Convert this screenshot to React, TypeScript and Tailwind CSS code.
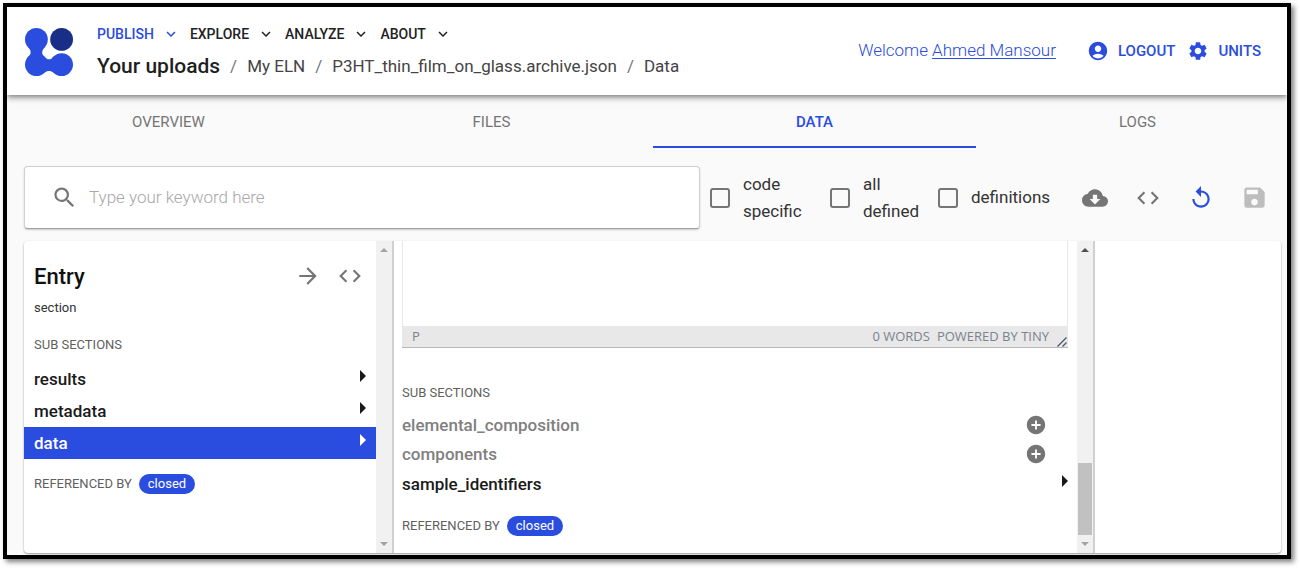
import React from 'react';
import {
  MdAccountCircle,
  MdAddCircle,
  MdArrowForward,
  MdCloudDownload,
  MdCode,
  MdExpandMore,
  MdReplay,
  MdSave,
  MdSearch,
  MdSettings,
} from 'react-icons/md';

function Logo() {
  return (
    <svg viewBox="0 0 48 48" className="mt-[2px] size-12 shrink-0" aria-label="Home" role="img">
      <g fill="#2a4cdf">
        <circle cx="11.4" cy="11.4" r="11.4" />
        <circle cx="11.4" cy="36.6" r="11.4" />
        <circle cx="36.6" cy="36.6" r="11.4" />
        <path d="M2.6 18.6C4.6 20.7 5.6 22.4 5.6 24.4S4.6 27.6 2.6 29.4L11.4 40L19 44.9C21 43.6 22.4 43 24 43S27 43.6 29 44.9L36 37L29.4 27.7C27.6 30.2 26 31.3 24 31.3C22.4 31.3 21.3 30.9 19.4 28.8C17.9 27.2 17.2 26 17.2 24.4C17.2 22.4 18.2 20.7 20.4 18.4L11.4 10Z" />
      </g>
      <circle cx="36.6" cy="11.4" r="11.4" fill="#192e86" />
    </svg>
  );
}

function Triangle() {
  return (
    <svg viewBox="0 0 6 12" className="mb-2 h-3 w-[6px] shrink-0" aria-hidden="true">
      <path d="M0 0L6 6L0 12Z" fill="currentColor" />
    </svg>
  );
}

const menu = [
  { label: 'PUBLISH', active: true },
  { label: 'EXPLORE', active: false },
  { label: 'ANALYZE', active: false },
  { label: 'ABOUT', active: false },
];

function Header() {
  return (
    <header className="relative z-10 flex h-[88px] items-center bg-white pr-[26px] pl-[18px] shadow-[0_2px_4px_-1px_rgba(0,0,0,0.3),0_4px_5px_rgba(0,0,0,0.18),0_1px_10px_rgba(0,0,0,0.14)]">
      <Logo />
      <div className="ml-6 flex flex-1 flex-col pt-1">
        <nav className="flex h-6 items-center gap-[10px]">
          {menu.map((m) => (
            <button
              key={m.label}
              className={`flex items-center gap-2 text-sm font-medium ${m.active ? 'text-[#2a4cdf]' : 'text-[#222]'}`}
            >
              {m.label}
              <MdExpandMore className="size-[18px]" />
            </button>
          ))}
        </nav>
        <nav aria-label="Breadcrumb" className="mt-[3px] flex h-9 items-center gap-[10px] text-[17px] whitespace-nowrap text-[#444]">
          <a href="#uploads" className="text-[21px] font-medium text-[#1f1f1f]">Your uploads</a>
          <span className="text-[#777]">/</span>
          <a href="#eln">My ELN</a>
          <span className="text-[#777]">/</span>
          <a href="#entry">P3HT_thin_film_on_glass.archive.json</a>
          <span className="text-[#777]">/</span>
          <a href="#data">Data</a>
        </nav>
      </div>
      <div className="flex items-center text-[#2a4cdf]">
        <span className="text-[17px] font-light">
          Welcome <a href="#account" className="underline underline-offset-2">Ahmed Mansour</a>
        </span>
        <button className="ml-[31px] flex items-center gap-[9px] text-[15px] font-medium">
          <MdAccountCircle className="size-[22px]" />
          LOGOUT
        </button>
        <button className="ml-3 flex items-center gap-[9px] text-[15px] font-medium">
          <MdSettings className="size-[22px]" />
          UNITS
        </button>
      </div>
    </header>
  );
}

function Tabs() {
  const tabs = ['OVERVIEW', 'FILES', 'DATA', 'LOGS'];
  return (
    <div role="tablist" className="-mr-3 grid grid-cols-4">
      {tabs.map((t) => (
        <button
          key={t}
          role="tab"
          aria-selected={t === 'DATA'}
          className={`h-[53px] border-b-2 pt-[3px] text-[15px] ${t === 'DATA' ? 'border-[#2a4cdf] font-medium text-[#2a4cdf]' : 'border-transparent text-[#757575]'}`}
        >
          {t}
        </button>
      ))}
    </div>
  );
}

function Check({ label, className }: { label: string; className: string }) {
  return (
    <label className={`flex items-center gap-[13px] text-[17px] leading-[27px] text-[#333] ${className}`}>
      <input type="checkbox" className="size-5 shrink-0 appearance-none rounded-[3px] border-2 border-[#757575]" />
      <span>{label}</span>
    </label>
  );
}

function Toolbar() {
  return (
    <div className="flex items-center pr-[13px]">
      <label className="flex h-[63px] min-w-0 flex-1 items-center gap-[11px] rounded border border-[#d0d0d0] border-b-[#a0a0a0] bg-white pl-[26px] shadow-[0_1px_2px_rgba(0,0,0,0.2)]">
        <MdSearch className="size-[27px] shrink-0 text-[#757575]" />
        <input
          type="text"
          aria-label="Keyword"
          placeholder="Type your keyword here"
          className="min-w-0 flex-1 bg-transparent text-[17px] font-light outline-none placeholder:text-[#a8a8a8]"
        />
      </label>
      <Check label="code specific" className="ml-[10px] w-[120px] pr-6" />
      <Check label="all defined" className="w-[108px] pr-4" />
      <Check label="definitions" className="w-[115px]" />
      <div className="ml-[29px] flex gap-[27px] text-[#757575]">
        <button aria-label="Download"><MdCloudDownload className="size-[26px]" /></button>
        <button aria-label="Code"><MdCode className="size-[26px]" /></button>
        <button aria-label="Reload" className="text-[#2a4cdf]"><MdReplay className="size-[26px]" /></button>
        <button aria-label="Save" className="text-[#bdbdbd]"><MdSave className="size-[27px]" /></button>
      </div>
    </div>
  );
}

function ScrollBar({ thumb = false }: { thumb?: boolean }) {
  return (
    <div className="flex w-[18px] shrink-0 flex-col items-center border-r-2 border-[#d0d0d0] bg-[#f1f1f1] py-[7px]" aria-hidden="true">
      <svg viewBox="0 0 8 4" className={`h-1 w-2 ${thumb ? 'text-[#505050]' : 'text-[#a3a3a3]'}`}>
        <path d="M0 4L4 0L8 4Z" fill="currentColor" />
      </svg>
      <div className="flex-1" />
      {thumb && <div className="mb-[7px] h-[72px] w-[14px] bg-[#c1c1c1]" />}
      <svg viewBox="0 0 8 4" className="h-1 w-2 text-[#a3a3a3]">
        <path d="M0 0L4 4L8 0Z" fill="currentColor" />
      </svg>
    </div>
  );
}

function ReferencedBy() {
  return (
    <div className="flex h-5 items-center gap-[7px]">
      <span className="text-[13px] text-[#5f5f5f]">REFERENCED BY</span>
      <button className="h-5 rounded-full bg-[#2a4cdf] px-[9px] text-[13px] leading-5 text-white">closed</button>
    </div>
  );
}

function EntryLane() {
  const rows = ['results', 'metadata', 'data'];
  return (
    <section className="flex w-[370px] shrink-0">
      <div className="flex-1">
        <div className="mt-[17px] flex h-9 items-center pr-[13px] pl-[10px]">
          <h2 className="flex-1 text-[22px] font-medium text-[#111]">Entry</h2>
          <button aria-label="Open entry" className="mr-4 text-[#757575]"><MdArrowForward className="size-[26px]" /></button>
          <button aria-label="Show code" className="text-[#757575]"><MdCode className="size-[26px]" /></button>
        </div>
        <p className="mt-1 px-[10px] text-[13px] leading-5 text-[#333]">section</p>
        <h3 className="mt-[17px] px-[10px] text-[13px] leading-5 text-[#5f5f5f]">SUB SECTIONS</h3>
        <ul className="mt-2">
          {rows.map((r) => (
            <li key={r}>
              <button
                className={`flex h-8 w-full items-center justify-between pt-[2px] pr-[10px] pl-[10px] text-[17px] font-medium ${r === 'data' ? 'bg-[#2a4cdf] text-white' : 'text-[#1a1a1a]'}`}
              >
                {r}
                <Triangle />
              </button>
            </li>
          ))}
        </ul>
        <div className="mt-[15px] px-[10px]"><ReferencedBy /></div>
      </div>
      <ScrollBar />
    </section>
  );
}

function DataLane() {
  return (
    <section className="flex w-[701px] shrink-0">
      <div className="flex-1 pr-[9px] pb-[17px] pl-2">
        <div className="h-[85px] border-x border-[#e8e8e8]" />
        <div className="flex h-[22px] items-center border-b border-[#b8b8b8] bg-[#e8e8e8] pl-[10px] font-['Open_Sans','Noto_Sans',sans-serif] text-[13px] text-[#7b828c]">
          <span className="flex-1">P</span>
          <span>0 WORDS</span>
          <a href="#tiny" className="ml-[7px]">POWERED BY TINY</a>
          <svg viewBox="0 0 10 10" className="mt-[10px] mr-px ml-2 size-[10px]" aria-hidden="true">
            <path d="M0.5 9.5L9.5 0.5M5.5 9.5L9.5 5.5" stroke="#4a5568" strokeWidth="1.3" fill="none" />
          </svg>
        </div>
        <h3 className="mt-[35px] text-[13px] leading-5 text-[#5f5f5f]">SUB SECTIONS</h3>
        <ul className="mt-[8px] text-[17px] font-medium text-[#808080]">
          {['elemental_composition', 'components'].map((r) => (
            <li key={r} className="flex h-[29px] items-center justify-between pr-[21px]">
              <span>{r}</span>
              <button aria-label={`Add ${r}`} className="mb-[2px] text-[#757575]"><MdAddCircle className="size-[22px]" /></button>
            </li>
          ))}
          <li>
            <button className="flex h-8 w-full items-center justify-between text-[#1a1a1a]">
              sample_identifiers
              <Triangle />
            </button>
          </li>
        </ul>
        <div className="mt-[15px]"><ReferencedBy /></div>
      </div>
      <ScrollBar thumb />
    </section>
  );
}

export default function App() {
  return (
    <div className="flex min-h-screen bg-white pt-[3px] pr-[9px] pb-[9px] pl-[3px] font-['Roboto','Liberation_Sans',sans-serif]">
      <div className="flex min-w-0 flex-1 flex-col overflow-hidden border-4 border-black bg-[#fafafa] shadow-[3px_3px_5px_rgba(0,0,0,0.5)]">
        <Header />
        <Tabs />
        <main className="flex flex-1 flex-col pt-[18px] pr-[6px] pb-[2px] pl-[17px]">
          <Toolbar />
          <div className="mt-3 flex flex-1 overflow-hidden rounded bg-white shadow-[0_1px_2px_rgba(0,0,0,0.4)]">
            <EntryLane />
            <DataLane />
          </div>
        </main>
      </div>
    </div>
  );
}
